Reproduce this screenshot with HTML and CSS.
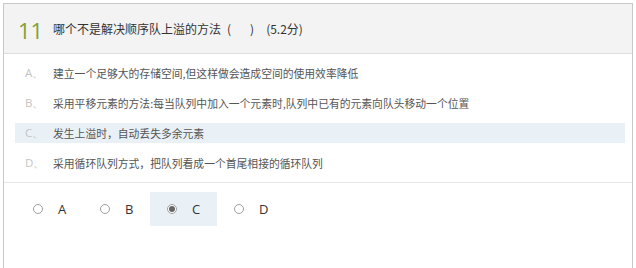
FILE: index.html
```html
<!DOCTYPE html>
<html lang="zh">
<head>
<meta charset="utf-8">
<link rel="stylesheet" href="styles.css">
</head>
<body>
<div class="card">
  <div class="head">
    <span class="num">11</span>
    <span class="title">哪个不是解决顺序队上溢的方法<span class="paren">(</span><span class="blank"></span><span class="paren">)</span><span class="score">(5.2分)</span></span>
  </div>
  <ul class="options">
    <li class="opt"><span class="key">A、</span><span class="txt">建立一个足够大的存储空间,但这样做会造成空间的使用效率降低</span></li>
    <li class="opt"><span class="key">B、</span><span class="txt">采用平移元素的方法:每当队列中加入一个元素时,队列中已有的元素向队头移动一个位置</span></li>
    <li class="opt sel"><span class="key">C、</span><span class="txt">发生上溢时，自动丢失多余元素</span></li>
    <li class="opt"><span class="key">D、</span><span class="txt">采用循环队列方式，把队列看成一个首尾相接的循环队列</span></li>
  </ul>
  <div class="answers">
    <div class="ans"><span class="radio"></span><span class="lab">A</span></div>
    <div class="ans"><span class="radio"></span><span class="lab">B</span></div>
    <div class="ans on"><span class="radio checked"></span><span class="lab">C</span></div>
    <div class="ans"><span class="radio"></span><span class="lab">D</span></div>
  </div>
</div>
</body>
</html>
```

FILE: styles.css
```css
html, body {
  margin: 0;
  padding: 0;
  background: #fff;
}
body {
  font-family: "Noto Sans CJK SC", "Noto Sans", sans-serif;
}
.card {
  margin: 3px 3px 0 3px;
  border: 1px solid #c8c8c8;
  border-bottom: none;
  height: 265px;
  box-sizing: border-box;
}
.head {
  height: 49px;
  background: #f3f3f3;
  border-bottom: 1px solid #dedede;
  display: flex;
  align-items: center;
  padding-left: 14px;
}
.num {
  font-family: "Open Sans", "Noto Sans", sans-serif;
  font-size: 22px;
  color: #83a032;
  width: 35px;
  line-height: 1;
  position: relative;
  top: 1px;
}
.title {
  font-size: 12px;
  color: #333;
  display: flex;
  align-items: center;
}
.paren {
  margin-left: 6px;
}
.blank {
  width: 13px;
}
.score {
  margin-left: 12px;
}
.options {
  list-style: none;
  margin: 0;
  padding: 9px 7px 9px 11px;
  border-bottom: 1px solid #e6e6e6;
  display: flex;
  flex-direction: column;
  gap: 10px;
}
.opt {
  height: 20px;
  display: flex;
  align-items: center;
  padding-left: 10px;
  font-size: 10.8px;
}
.opt.sel {
  background: #e9f1f7;
}
.key {
  font-family: "Open Sans", "Noto Sans", sans-serif;
  color: #c4c4c4;
  width: 28px;
  font-size: 11.5px;
}
.txt {
  color: #555;
}
.answers {
  display: flex;
  padding: 9px 0 0 12px;
}
.ans {
  width: 67px;
  height: 34px;
  display: flex;
  align-items: center;
  padding-left: 17px;
  box-sizing: border-box;
}
.ans.on {
  background: #e9f1f7;
}
.radio {
  width: 10px;
  height: 10px;
  border: 1px solid #a0a0a0;
  border-radius: 50%;
  box-sizing: border-box;
  background: #fff;
  display: flex;
  align-items: center;
  justify-content: center;
  margin-right: 15px;
}
.radio.checked::after {
  content: "";
  width: 6px;
  height: 6px;
  border-radius: 50%;
  background: #666;
}
.lab {
  font-family: "Open Sans", "Noto Sans", sans-serif;
  font-size: 13px;
  color: #333;
}
```
